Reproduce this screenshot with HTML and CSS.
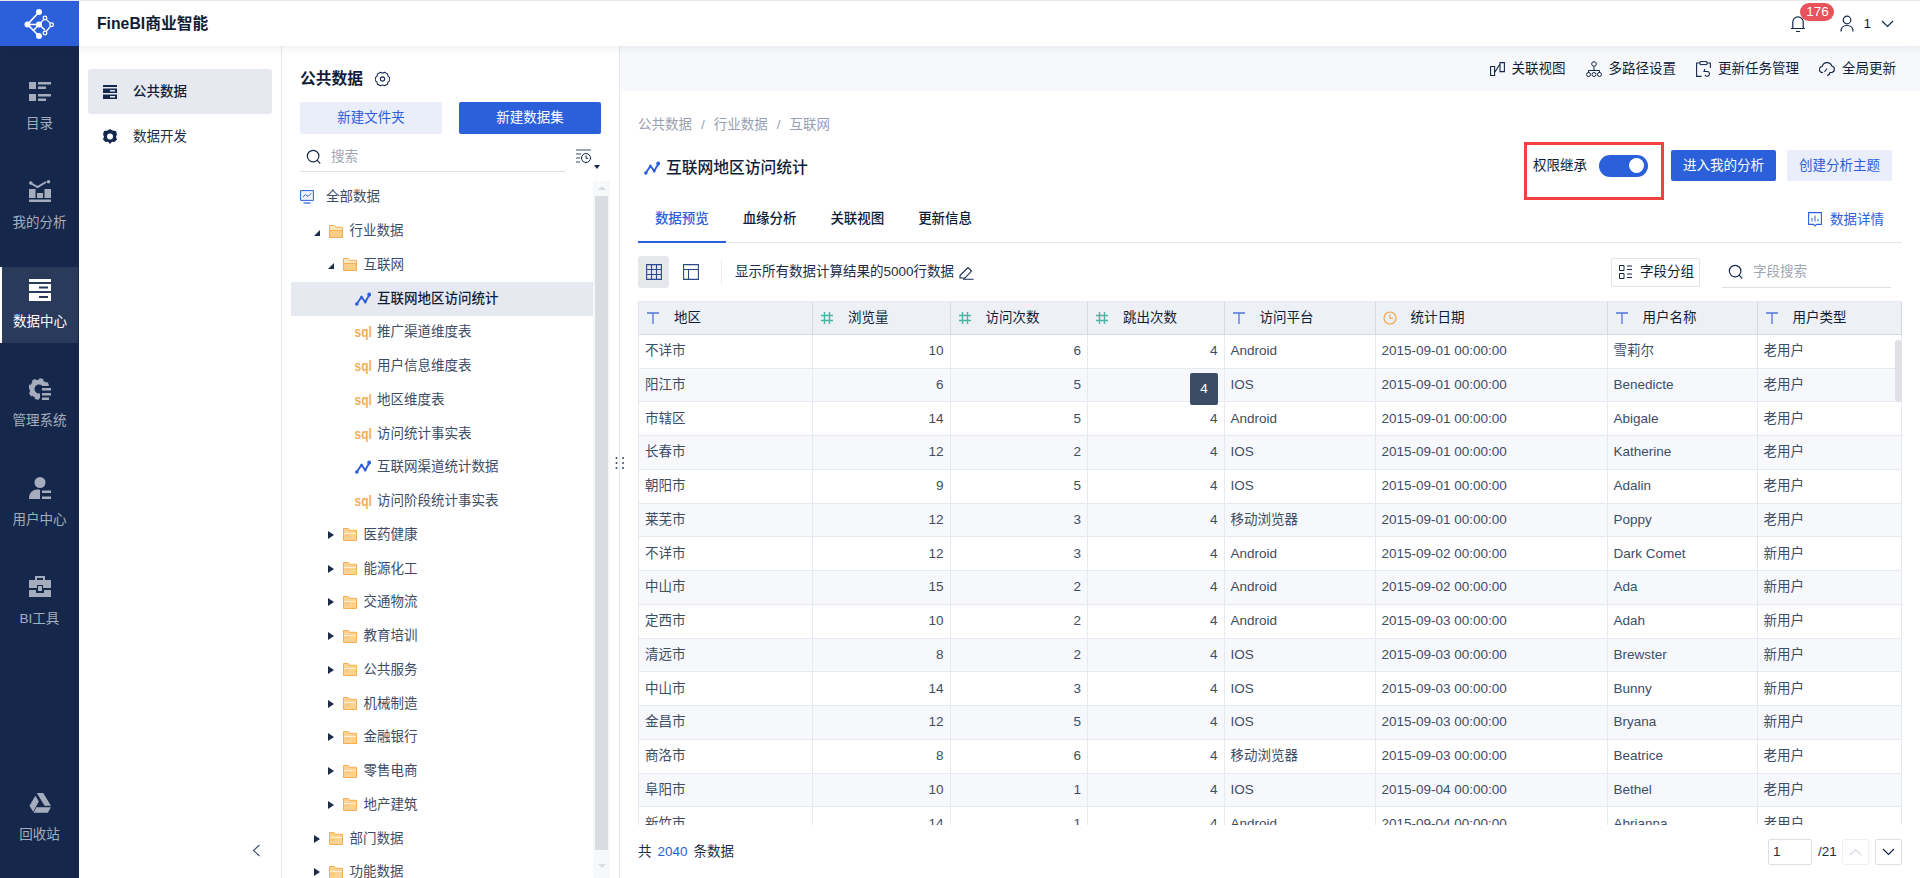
FILE: index.html
```html
<!DOCTYPE html>
<html lang="zh-CN">
<head>
<meta charset="utf-8">
<title>FineBI商业智能</title>
<link rel="stylesheet" href="styles.css">
</head>
<body>
<svg class="sprite" xmlns="http://www.w3.org/2000/svg">
  <symbol id="folder" viewBox="0 0 14 13"><path d="M.5.500h4.800l1.400 1.800h6.800v10.200H.5z" fill="#fbd28f" stroke="#f4ae55"/><path d="M1 5.400h12" stroke="#fff" stroke-opacity=".7"/><path d="M2.500 7.800h3.200" stroke="#f4ae55" stroke-opacity=".7"/></symbol>
  <symbol id="folder-open" viewBox="0 0 14 13"><path d="M.5.500h4.800l1.400 1.800h6.800v10.200H.5z" fill="#fde6bf" stroke="#f4ae55"/><path d="M.7 5.500h12.600v7H.7z" fill="#fbcf88" stroke="#f4ae55"/></symbol>
  <symbol id="trend" viewBox="0 0 16 14"><path d="M1.800 12L6.500 5l3.700 5L14.300 3" fill="none" stroke="#2c60db" stroke-width="1.900"/><circle cx="1.800" cy="12" r="1.800" fill="#2c60db"/><circle cx="6.500" cy="5.500" r="1.400" fill="#2c60db"/><circle cx="10.200" cy="10" r="1.400" fill="#2c60db"/><circle cx="14.200" cy="2.500" r="2" fill="#2c60db"/></symbol>
  <symbol id="search" viewBox="0 0 18 18"><circle cx="8" cy="8" r="6.500" fill="none" stroke="#14284c" stroke-width="1.300"/><path d="M12.600 12.600l3.400 3.800" stroke="#14284c" stroke-width="1.300"/></symbol>
  <symbol id="ty-t" viewBox="0 0 14 14"><path d="M1 2h12M7 2v11" fill="none" stroke="#4f74dd" stroke-width="1.300"/></symbol>
  <symbol id="ty-n" viewBox="0 0 14 14"><path d="M1 4.500h12M1 9.500h12M4.500 1v12M9.500 1v12" fill="none" stroke="#47b6a5" stroke-width="1.400"/></symbol>
  <symbol id="ty-d" viewBox="0 0 14 14"><circle cx="7" cy="7" r="6" fill="none" stroke="#f0a650" stroke-width="1.200"/><path d="M7 3.500V7.300h3" fill="none" stroke="#f0a650" stroke-width="1.200"/></symbol>
</svg>

<div class="app">
  <header class="topbar">
    <div class="logo">
      <svg width="50" height="42" viewBox="0 0 50 42"><path d="M24 9L12.500 21.500 24 33M12.500 21.500L24 21.500 18 28M24 21.500L30 27" fill="none" stroke="#fff" stroke-width="1.600"/><path d="M24 21.500L30 15l6.700 6.700L30 30" fill="none" stroke="#fff" stroke-width="1.200"/><g fill="#fff"><circle cx="24" cy="9" r="3"/><circle cx="12.500" cy="21.500" r="3"/><circle cx="24" cy="21.500" r="3"/><circle cx="24" cy="33" r="3"/></g><g fill="#2c60db" stroke="#fff" stroke-width="1.300"><circle cx="30" cy="15" r="1.800"/><circle cx="36.700" cy="21.700" r="1.800"/><circle cx="30" cy="30" r="1.800"/></g></svg>
    </div>
    <div class="brand">FineBI商业智能</div>
    <div class="top-right">
      <span class="bell">
        <svg width="16" height="18" viewBox="0 0 16 18"><path d="M1 13.500h14M2.800 13.500V7a5.200 5.200 0 0 1 10.400 0v6.500M6 16.500h4" fill="none" stroke="#14284c" stroke-width="1.200"/></svg>
        <span class="badge">176</span>
      </span>
      <svg class="user" width="14" height="17" viewBox="0 0 14 17"><circle cx="7" cy="5" r="3.800" fill="none" stroke="#14284c" stroke-width="1.200"/><path d="M1 16.500c0-4 2.500-6 6-6s6 2 6 6" fill="none" stroke="#14284c" stroke-width="1.200"/></svg>
      <span class="user-name">1</span>
      <svg width="13" height="8" viewBox="0 0 13 8"><path d="M1 1l5.500 5.500L12 1" fill="none" stroke="#14284c" stroke-width="1.200"/></svg>
    </div>
  </header>

  <div class="body">
    <nav class="nav">
      <a class="nav-item">
        <svg class="nav-icon" viewBox="0 0 22 20"><path d="M0 0h7v7H0zM0 12h7v7H0zM9 0h13v2.500H9zM9 4.500h8V7H9zM9 12h13v2.500H9zM9 16.500h8V19H9z"/></svg>
        <span>目录</span>
      </a>
      <a class="nav-item">
        <svg class="nav-icon" viewBox="0 0 22 22"><path d="M0 9h6.500v9H0zM8 13h6v5H8zM15.500 9H22v9h-6.500zM0 19.500h22V22H0z"/><path d="M1.500 3l7 4 8.500-5" fill="none" stroke="currentColor" stroke-width="2"/><circle cx="1.800" cy="3" r="1.800"/><circle cx="19.500" cy="1.800" r="1.800"/></svg>
        <span>我的分析</span>
      </a>
      <a class="nav-item active">
        <svg class="nav-icon" viewBox="0 0 22 22"><path fill-rule="evenodd" d="M0 0h22v3H0zM0 5h22v7H0zM10 7.500v2h9v-2zM0 14h22v8H0zM10 17v2h9v-2z"/></svg>
        <span>数据中心</span>
      </a>
      <a class="nav-item">
        <svg class="nav-icon" viewBox="0 0 22 22"><circle cx="10" cy="11" r="7" fill="none" stroke="currentColor" stroke-width="5"/><circle cx="10" cy="11" r="9.800" fill="none" stroke="currentColor" stroke-width="2" stroke-dasharray="4 3.700"/><path class="nav-cut" d="M11 8h11v14H11z"/><path d="M13 10h9v2.500h-9zM13 15h9v2.500h-9zM13 19.500h7V22h-7z"/></svg>
        <span>管理系统</span>
      </a>
      <a class="nav-item">
        <svg class="nav-icon" viewBox="0 0 22 22"><circle cx="11" cy="5.500" r="5.500"/><path d="M0 22c0-6 3-9 8-9.500.8 0 2.800 0 3 .5v9zM13 13.500h9v2.500h-9zM13 19.500h9V22h-9z"/></svg>
        <span>用户中心</span>
      </a>
      <a class="nav-item">
        <svg class="nav-icon" viewBox="0 0 22 22"><path fill-rule="evenodd" d="M6 4V0h10v4h-2V2H8v2zM0 4h22v8h-8V9H8v3H0zM9 10h4v5H9zM0 14h7v3h8v-3h7v7H0z"/></svg>
        <span>BI工具</span>
      </a>
      <a class="nav-item push">
        <svg class="nav-icon" viewBox="0 0 24 22"><path d="M8.500 0h7L24 14h-7zM7 3l3.700 6.300L4.500 20.500.5 14zM8 15.500h16l-3.500 6H5z"/></svg>
        <span>回收站</span>
      </a>
    </nav>

    <aside class="side">
      <a class="side-item selected">
        <svg width="14" height="14" viewBox="0 0 14 14"><path fill="#14284c" fill-rule="evenodd" d="M0 0h14v2H0zM0 3.500h14V8H0zM7 5v1.500h5V5zM0 9.500h14V14H0zM7 11v1.500h5V11z"/></svg>
        <span>公共数据</span>
      </a>
      <a class="side-item">
        <svg width="14" height="15" viewBox="0 0 14 15"><path fill="#14284c" fill-rule="evenodd" d="M7 0l2.500 1.600L13 2l1 3.500-1 2 1 3-2.500 2.500-2.500-.2L7 15l-2-2.200-2.500.2L0 10.500l1-3-1-2L1 2l3.500-.4zM7 4.500a3 3 0 1 0 0 6 3 3 0 0 0 0-6z"/></svg>
        <span>数据开发</span>
      </a>
      <div class="side-foot">
        <svg width="9" height="13" viewBox="0 0 9 13"><path d="M7.500 1L1.500 6.500l6 5.500" fill="none" stroke="#3d4d66" stroke-width="1.100"/></svg>
      </div>
    </aside>

    <section class="panel">
      <div class="panel-head">
        <h2>公共数据</h2>
        <svg width="15" height="16" viewBox="0 0 15 16"><path d="M5.500 1.200C6.500 2 8.500 2 9.500 1.200l3.200 1.900c-.2 1.300.8 3 2 3.400v3.300c-1.200.4-2.200 2-2 3.300l-3.200 1.700c-1-.8-3-.8-4 0l-3.200-1.700c.2-1.300-.8-2.900-2-3.300V6.500c1.200-.4 2.200-2.100 2-3.400z" fill="none" stroke="#14284c" stroke-width="1.100" stroke-linejoin="round"/><circle cx="7.500" cy="8" r="2.100" fill="none" stroke="#14284c" stroke-width="1.100"/></svg>
      </div>
      <div class="panel-btns">
        <button class="btn btn-light wide">新建文件夹</button>
        <button class="btn btn-blue wide">新建数据集</button>
      </div>
      <div class="panel-search">
        <div class="search-box">
          <svg width="16" height="16"><use href="#search"/></svg>
          <span class="placeholder">搜索</span>
        </div>
        <div class="filter">
          <svg width="15" height="15" viewBox="0 0 15 15"><path d="M0 1h15M0 5h5M0 9h4M0 13h4" stroke="#3d4d66" fill="none"/><circle cx="10" cy="9" r="4.500" fill="#fff" stroke="#14284c"/><path d="M10 6.500v2.800h2.200" fill="none" stroke="#14284c"/></svg>
          <i class="filter-caret"></i>
        </div>
      </div>
      <div class="tree-wrap">
        <div class="tree">
          <div class="row lv0"><svg class="root-ic" width="14" height="15" viewBox="0 0 14 15"><path d="M.6.600h12.800v9.800H.6z" fill="#eef2fc" stroke="#2c60db"/><path d="M3 7l2.500-2.500L8 6.500 11 3.500" fill="none" stroke="#2c60db"/><path d="M3.500 13h7" stroke="#2c60db" stroke-width="1.200"/></svg><span>全部数据</span></div>
          <div class="row lv1"><i class="car-open"></i><svg class="fol"><use href="#folder-open"/></svg><span>行业数据</span></div>
          <div class="row lv2"><i class="car-open"></i><svg class="fol"><use href="#folder-open"/></svg><span>互联网</span></div>
          <div class="row leaf current"><svg class="leaf-ic"><use href="#trend"/></svg><span>互联网地区访问统计</span></div>
          <div class="row leaf"><b class="sql">sql</b><span>推广渠道维度表</span></div>
          <div class="row leaf"><b class="sql">sql</b><span>用户信息维度表</span></div>
          <div class="row leaf"><b class="sql">sql</b><span>地区维度表</span></div>
          <div class="row leaf"><b class="sql">sql</b><span>访问统计事实表</span></div>
          <div class="row leaf"><svg class="leaf-ic"><use href="#trend"/></svg><span>互联网渠道统计数据</span></div>
          <div class="row leaf"><b class="sql">sql</b><span>访问阶段统计事实表</span></div>
          <div class="row lv2"><i class="car"></i><svg class="fol"><use href="#folder"/></svg><span>医药健康</span></div>
          <div class="row lv2"><i class="car"></i><svg class="fol"><use href="#folder"/></svg><span>能源化工</span></div>
          <div class="row lv2"><i class="car"></i><svg class="fol"><use href="#folder"/></svg><span>交通物流</span></div>
          <div class="row lv2"><i class="car"></i><svg class="fol"><use href="#folder"/></svg><span>教育培训</span></div>
          <div class="row lv2"><i class="car"></i><svg class="fol"><use href="#folder"/></svg><span>公共服务</span></div>
          <div class="row lv2"><i class="car"></i><svg class="fol"><use href="#folder"/></svg><span>机械制造</span></div>
          <div class="row lv2"><i class="car"></i><svg class="fol"><use href="#folder"/></svg><span>金融银行</span></div>
          <div class="row lv2"><i class="car"></i><svg class="fol"><use href="#folder"/></svg><span>零售电商</span></div>
          <div class="row lv2"><i class="car"></i><svg class="fol"><use href="#folder"/></svg><span>地产建筑</span></div>
          <div class="row lv1"><i class="car"></i><svg class="fol"><use href="#folder"/></svg><span>部门数据</span></div>
          <div class="row lv1"><i class="car"></i><svg class="fol"><use href="#folder"/></svg><span>功能数据</span></div>
        </div>
        <div class="vbar">
          <i class="arr-up"></i>
          <div class="vthumb"></div>
          <i class="arr-down"></i>
        </div>
      </div>
      <svg class="grip" width="10" height="14" viewBox="0 0 10 14"><g fill="#3d4d66"><circle cx="1.500" cy="2" r="1"/><circle cx="1.500" cy="7" r="1"/><circle cx="1.500" cy="12" r="1"/><circle cx="8" cy="2" r="1"/><circle cx="8" cy="7" r="1"/><circle cx="8" cy="12" r="1"/></g></svg>
    </section>

    <main class="main">
      <div class="actions">
        <a class="action"><svg width="15" height="14" viewBox="0 0 15 14"><path d="M.6 4.500h4v9h-4zM10 .6h4.400v9H10zM4.600 10.500L10 2" fill="none" stroke="#14284c" stroke-width="1.100"/></svg>关联视图</a>
        <a class="action"><svg width="16" height="16" viewBox="0 0 16 16"><circle cx="8" cy="3" r="2.300" fill="none" stroke="#14284c"/><path d="M8 5.500v4M2.500 12V9.500h11V12" fill="none" stroke="#14284c"/><circle cx="2.500" cy="13.500" r="2" fill="none" stroke="#14284c"/><circle cx="8" cy="13.500" r="2" fill="none" stroke="#14284c"/><circle cx="13.500" cy="13.500" r="2" fill="none" stroke="#14284c"/></svg>多路径设置</a>
        <a class="action"><svg width="15" height="16" viewBox="0 0 15 16"><path d="M4 2H.6v13.400h5M11 2h3.400v5" fill="none" stroke="#14284c" stroke-width="1.100"/><path d="M4 .6h7v3H4z" fill="none" stroke="#14284c"/><path d="M9 8l-1 2.500h3.500a2.400 2.400 0 1 1-2.500 3.600" fill="none" stroke="#14284c" stroke-width="1.100"/></svg>更新任务管理</a>
        <a class="action"><svg width="16" height="15" viewBox="0 0 16 15"><path d="M4 11.500H3.500a3 3 0 0 1-.3-6A5 5 0 0 1 12.800 5a3.300 3.300 0 0 1-.3 6.500H11" fill="none" stroke="#14284c" stroke-width="1.100"/><path d="M8 7.500l-2.500 3.500M8 14.500a3.500 3.500 0 0 0 3-3.500" fill="none" stroke="#14284c" stroke-width="1.100"/></svg>全局更新</a>
      </div>

      <div class="content">
        <div class="crumbs"><span>公共数据</span><i>/</i><span>行业数据</span><i>/</i><span>互联网</span></div>
        <div class="head">
          <div class="title"><svg width="16" height="14"><use href="#trend"/></svg><h1>互联网地区访问统计</h1></div>
          <div class="head-right">
            <div class="perm">
              <span>权限继承</span>
              <span class="toggle"><i></i></span>
            </div>
            <button class="btn btn-blue head-btn">进入我的分析</button>
            <button class="btn btn-light head-btn">创建分析主题</button>
          </div>
        </div>
        <div class="tabs">
          <a class="tab on">数据预览</a>
          <a class="tab">血缘分析</a>
          <a class="tab">关联视图</a>
          <a class="tab">更新信息</a>
          <a class="detail"><svg width="14" height="15" viewBox="0 0 14 15"><path d="M.6.600h12.800v11.800H8.500L7 14 5.500 12.400H.6z" fill="none" stroke="#2c60db" stroke-width="1.100"/><path d="M4 6v3.500M7 3.500v6M10 7v2.500" stroke="#2c60db"/></svg>数据详情</a>
        </div>
        <div class="tools">
          <span class="view on"><svg width="16" height="16" viewBox="0 0 16 16"><path d="M.6.600h14.800v14.800H.6zM.6 5.500h14.800M.6 10.500h14.800M5.500.6v14.800M10.500.6v14.800" fill="none" stroke="#2b4a8a" stroke-width="1.100"/></svg></span>
          <span class="view"><svg width="16" height="16" viewBox="0 0 16 16"><path d="M.6.600h14.800v14.800H.6zM.6 5.500h14.800M5.500 5.500v9.900" fill="none" stroke="#2b4a8a" stroke-width="1.100"/></svg></span>
          <i class="vline"></i>
          <span class="notice">显示所有数据计算结果的5000行数据</span>
          <svg class="pencil" width="15" height="15" viewBox="0 0 15 15"><path d="M1 10.500L9 2.500l3.500 3.500-6.500 7H1zM4 14.200h10.500" fill="none" stroke="#14284c" stroke-width="1.100"/></svg>
          <button class="group-btn"><svg width="13" height="14" viewBox="0 0 13 14"><path d="M.5.500h4.500v5H.500zM.5 8.500h4.500v5H.500zM8 1h5M8 4.500h5M8 9h5M8 12.500h5" fill="none" stroke="#14284c"/></svg>字段分组</button>
          <div class="field-search"><svg width="16" height="16"><use href="#search"/></svg><span class="placeholder">字段搜索</span></div>
        </div>

        <div class="table">
          <div class="tr th">
            <div class="td"><svg class="ty"><use href="#ty-t"/></svg>地区</div>
            <div class="td"><svg class="ty"><use href="#ty-n"/></svg>浏览量</div>
            <div class="td"><svg class="ty"><use href="#ty-n"/></svg>访问次数</div>
            <div class="td"><svg class="ty"><use href="#ty-n"/></svg>跳出次数</div>
            <div class="td"><svg class="ty"><use href="#ty-t"/></svg>访问平台</div>
            <div class="td"><svg class="ty"><use href="#ty-d"/></svg>统计日期</div>
            <div class="td"><svg class="ty"><use href="#ty-t"/></svg>用户名称</div>
            <div class="td"><svg class="ty"><use href="#ty-t"/></svg>用户类型</div>
          </div>
          <div class="tr"><div class="td">不详市</div><div class="td num">10</div><div class="td num">6</div><div class="td num">4</div><div class="td">Android</div><div class="td">2015-09-01 00:00:00</div><div class="td">雪莉尔</div><div class="td">老用户</div></div>
          <div class="tr"><div class="td">阳江市</div><div class="td num">6</div><div class="td num">5</div><div class="td num">4</div><div class="td">IOS</div><div class="td">2015-09-01 00:00:00</div><div class="td">Benedicte</div><div class="td">老用户</div></div>
          <div class="tr"><div class="td">市辖区</div><div class="td num">14</div><div class="td num">5</div><div class="td num">4</div><div class="td">Android</div><div class="td">2015-09-01 00:00:00</div><div class="td">Abigale</div><div class="td">老用户</div></div>
          <div class="tr"><div class="td">长春市</div><div class="td num">12</div><div class="td num">2</div><div class="td num">4</div><div class="td">IOS</div><div class="td">2015-09-01 00:00:00</div><div class="td">Katherine</div><div class="td">老用户</div></div>
          <div class="tr"><div class="td">朝阳市</div><div class="td num">9</div><div class="td num">5</div><div class="td num">4</div><div class="td">IOS</div><div class="td">2015-09-01 00:00:00</div><div class="td">Adalin</div><div class="td">老用户</div></div>
          <div class="tr"><div class="td">莱芜市</div><div class="td num">12</div><div class="td num">3</div><div class="td num">4</div><div class="td">移动浏览器</div><div class="td">2015-09-01 00:00:00</div><div class="td">Poppy</div><div class="td">老用户</div></div>
          <div class="tr"><div class="td">不详市</div><div class="td num">12</div><div class="td num">3</div><div class="td num">4</div><div class="td">Android</div><div class="td">2015-09-02 00:00:00</div><div class="td">Dark Comet</div><div class="td">新用户</div></div>
          <div class="tr"><div class="td">中山市</div><div class="td num">15</div><div class="td num">2</div><div class="td num">4</div><div class="td">Android</div><div class="td">2015-09-02 00:00:00</div><div class="td">Ada</div><div class="td">新用户</div></div>
          <div class="tr"><div class="td">定西市</div><div class="td num">10</div><div class="td num">2</div><div class="td num">4</div><div class="td">Android</div><div class="td">2015-09-03 00:00:00</div><div class="td">Adah</div><div class="td">新用户</div></div>
          <div class="tr"><div class="td">清远市</div><div class="td num">8</div><div class="td num">2</div><div class="td num">4</div><div class="td">IOS</div><div class="td">2015-09-03 00:00:00</div><div class="td">Brewster</div><div class="td">新用户</div></div>
          <div class="tr"><div class="td">中山市</div><div class="td num">14</div><div class="td num">3</div><div class="td num">4</div><div class="td">IOS</div><div class="td">2015-09-03 00:00:00</div><div class="td">Bunny</div><div class="td">新用户</div></div>
          <div class="tr"><div class="td">金昌市</div><div class="td num">12</div><div class="td num">5</div><div class="td num">4</div><div class="td">IOS</div><div class="td">2015-09-03 00:00:00</div><div class="td">Bryana</div><div class="td">新用户</div></div>
          <div class="tr"><div class="td">商洛市</div><div class="td num">8</div><div class="td num">6</div><div class="td num">4</div><div class="td">移动浏览器</div><div class="td">2015-09-03 00:00:00</div><div class="td">Beatrice</div><div class="td">老用户</div></div>
          <div class="tr"><div class="td">阜阳市</div><div class="td num">10</div><div class="td num">1</div><div class="td num">4</div><div class="td">IOS</div><div class="td">2015-09-04 00:00:00</div><div class="td">Bethel</div><div class="td">老用户</div></div>
          <div class="tr"><div class="td">新竹市</div><div class="td num">14</div><div class="td num">1</div><div class="td num">4</div><div class="td">Android</div><div class="td">2015-09-04 00:00:00</div><div class="td">Abrianna</div><div class="td">老用户</div></div>
          <div class="tip">4</div>
          <div class="hthumb"></div>
        </div>

        <div class="foot">
          <div class="count">共<b>2040</b>条数据</div>
          <div class="pager">
            <span class="page-input">1</span>
            <span class="page-total">/21</span>
            <span class="page-btn off"><svg width="13" height="8" viewBox="0 0 13 8"><path d="M1 7l5.500-5.500L12 7" fill="none" stroke="#d5d9e2" stroke-width="1.200"/></svg></span>
            <span class="page-btn"><svg width="13" height="8" viewBox="0 0 13 8"><path d="M1 1l5.500 5.500L12 1" fill="none" stroke="#14284c" stroke-width="1.200"/></svg></span>
          </div>
        </div>
      </div>
    </main>
  </div>
</div>
</body>
</html>
```

FILE: styles.css
```css
*, *::before, *::after { box-sizing: border-box; }
html, body { margin: 0; height: 100%; overflow: hidden; }
body {
  background: #fff;
  color: #0f1d38;
  font-family: "Liberation Sans", "Noto Sans CJK SC", sans-serif;
  font-size: 13.5px;
  line-height: 20px;
}
i { font-style: normal; display: block; }
h1, h2 { margin: 0; }
button { font: inherit; border: 0; padding: 0; }
.sprite { display: none; }

.app { display: flex; flex-direction: column; width: 1920px; height: 878px; overflow: hidden; }

/* top bar */
.topbar {
  position: relative;
  z-index: 2;
  flex: none;
  display: flex;
  align-items: center;
  height: 46px;
  background: #fff;
  border-top: 1px solid #e5e7eb;
  box-shadow: 0 2px 8px rgba(20, 40, 76, .08);
}
.logo { flex: none; display: flex; align-items: center; justify-content: center; width: 79px; height: 45px; background: #2c60db; }
.brand { margin-left: 18px; font-size: 15.75px; font-weight: 700; color: #0f1d38; }
.top-right { display: flex; align-items: center; margin-left: auto; padding-right: 26px; }
.bell { position: relative; display: flex; margin-right: 34px; }
.badge {
  position: absolute;
  left: 10px;
  top: -12px;
  min-width: 34px;
  height: 18px;
  border-radius: 9px;
  background: #e8525a;
  color: #fff;
  line-height: 18px;
  text-align: center;
}
.user-name { margin: 0 10px 0 9px; }

/* nav */
.body { flex: 1; display: flex; min-height: 0; }
.nav {
  flex: none;
  display: flex;
  flex-direction: column;
  gap: 23px;
  width: 79px;
  padding: 23px 0 22px;
  background: #15284b;
  color: #a5adbd;
}
.nav-item { display: flex; flex-direction: column; align-items: center; height: 76px; padding-top: 12px; }
.nav-item span { margin-top: 11px; white-space: nowrap; }
.nav-icon { width: 22px; height: 22px; fill: currentColor; }
.nav-cut { fill: #15284b; }
.nav-item.active { margin-right: 1px; background: #2a3a5a; border-left: 2px solid #fff; color: #fff; }
.nav-item.push { margin-top: auto; }

/* secondary side */
.side { flex: none; display: flex; flex-direction: column; width: 203px; padding: 23px 9px 21px; border-right: 1px solid #e3e6ec; }
.side-item { display: flex; align-items: center; height: 45px; padding-left: 15px; color: #1c2c4a; }
.side-item svg { margin-right: 16px; }
.side-item.selected { background: #e6e9f0; border-radius: 3px; font-weight: 500; color: #0f1d38; }
.side-foot { display: flex; justify-content: flex-end; margin-top: auto; padding-right: 11px; }

/* tree panel */
.panel { position: relative; flex: none; display: flex; flex-direction: column; width: 338px; padding-top: 23px; border-right: 1px solid #e3e6ec; }
.panel-head { display: flex; align-items: center; gap: 12px; height: 20px; margin-left: 18px; }
.panel-head h2 { font-size: 15.75px; font-weight: 700; }
.panel-btns { display: flex; gap: 17px; margin: 13px 0 0 18px; }
.btn { border-radius: 2px; text-align: center; }
.btn-blue { background: #2c60db; color: #fff; }
.btn-light { background: #e9eefa; color: #2c60db; }
.wide { width: 142px; height: 32px; }
.panel-search { display: flex; height: 38px; margin-left: 18px; }
.search-box { display: flex; align-items: center; width: 265px; height: 38px; padding: 8px 0 0 6px; border-bottom: 1px solid #dde0e6; }
.placeholder { margin-left: 9px; color: #a0a6b2; }
.filter { position: relative; margin-left: 11px; padding-top: 15px; }
.filter-caret {
  position: absolute;
  left: 18px;
  top: 31px;
  border: 3px solid transparent;
  border-top: 4px solid #14284c;
  border-bottom: 0;
}
.tree-wrap { flex: 1; display: flex; min-height: 0; margin: 8.5px 0 0 9px; }
.tree { flex: none; width: 302px; overflow: hidden; }
.row { display: flex; align-items: center; height: 33.75px; white-space: nowrap; color: #3d4d66; }
.lv0 { padding-left: 9px; }
.root-ic { margin-right: 12px; }
.lv1 { padding-left: 23px; }
.lv2 { padding-left: 37px; }
.leaf { padding-left: 64px; }
.car, .car-open { flex: none; width: 0; height: 0; }
.car { margin-right: 10px; border-top: 4px solid transparent; border-bottom: 4px solid transparent; border-left: 6px solid #1c2c4a; margin-right: 9px; }
.car-open { margin: 3px 9px 0 0; border-left: 6px solid transparent; border-bottom: 6px solid #1c2c4a; }
.fol { flex: none; width: 14px; height: 13px; margin-right: 6.5px; }
.leaf-ic { flex: none; width: 16px; height: 14px; margin-right: 6px; }
.sql { flex: none; width: 16px; margin-right: 6px; color: #f4ae55; font-size: 12px; line-height: 14px; white-space: nowrap; transform: translateX(-.5px) scaleY(1.2); }
.current { background: #e6e9f0; color: #0f1d38; font-weight: 500; }
.vbar { flex: none; display: flex; flex-direction: column; align-items: center; width: 17px; background: #f7f8fa; }
.vthumb { width: 13px; height: 654px; margin-top: 6px; background: #d9dce1; }
.arr-up, .arr-down { width: 0; height: 0; border: 4px solid transparent; }
.arr-up { margin-top: 5px; border-top: 0; border-bottom: 4px solid #d9dce1; }
.arr-down { margin-top: 14px; border-bottom: 0; border-top: 4px solid #d9dce1; }
.grip { position: absolute; right: -6px; top: 410px; z-index: 1; }

/* main */
.main { flex: 1; display: flex; flex-direction: column; min-width: 0; }
.actions { flex: none; display: flex; justify-content: flex-end; gap: 20px; height: 45px; padding-right: 24px; background: #f7f8fb; align-items: center; }
.action { display: flex; align-items: center; gap: 7px; color: #0f1d38; white-space: nowrap; }
.content { flex: 1; display: flex; flex-direction: column; padding: 24px 18px 0; min-height: 0; }
.crumbs { display: flex; gap: 9px; height: 20px; color: #98a0af; }
.head { display: flex; align-items: center; height: 31px; margin-top: 15px; }
.title { display: flex; align-items: center; gap: 6px; margin: 4px 0 0 6px; }
.title h1 { font-size: 15.75px; font-weight: 500; color: #0f1d38; }
.head-right { display: flex; align-items: center; margin-left: auto; margin-right: 10px; }
.perm {
  position: relative;
  display: flex;
  align-items: center;
  gap: 12px;
  margin-right: 23px;
}
.perm::after {
  content: "";
  position: absolute;
  left: -9px;
  right: -16px;
  top: -13px;
  height: 58px;
  border: 3px solid #f54040;
}
.toggle { display: block; position: relative; width: 49px; height: 22px; border-radius: 11px; background: #2c60db; }
.toggle i { position: absolute; right: 4px; top: 3.5px; width: 15px; height: 15px; border-radius: 50%; background: #fff; }
.head-btn { width: 105px; height: 31px; margin-left: 11px; }
.perm + .head-btn { margin-left: 0; }
.tabs { display: flex; align-items: center; width: 1264px; height: 46px; margin-top: 16px; border-bottom: 1px solid #e3e6ec; }
.tab { display: flex; align-items: center; justify-content: center; width: 87.750px; height: 46px; font-weight: 500; color: #0f1d38; border-bottom: 2px solid transparent; }
.tab.on { color: #2c60db; border-bottom-color: #2c60db; }
.detail { display: flex; align-items: center; gap: 8px; margin-left: auto; margin-right: 18px; color: #2c60db; }
.tools { display: flex; align-items: center; width: 1264px; height: 32px; margin-top: 13px; }
.view { display: flex; align-items: center; justify-content: center; width: 31px; height: 32px; border-radius: 3px; margin-right: 6px; }
.view.on { background: #e6e8ec; }
.vline { width: 1px; height: 26px; margin: 0 13px 0 9px; background: #eceef2; }
.notice { color: #1c2c4a; white-space: nowrap; }
.pencil { margin-left: 5px; }
.group-btn { display: flex; align-items: center; gap: 8px; height: 29px; width: 89px; margin-left: auto; padding-left: 7px; background: #fff; border: 1px solid #e1e4ea; border-radius: 2px; color: #0f1d38; }
.field-search { display: flex; align-items: center; width: 169px; height: 32px; margin: 0 11px 0 22px; padding-left: 6px; border-bottom: 1px solid #dde0e6; }

/* table */
.table { position: relative; flex: none; width: 1264px; height: 524px; margin-top: 13px; overflow: hidden; border-left: 1px solid #e3e6ec; }
.tr {
  display: grid;
  grid-template-columns: 174px 137.5px 137.500px 136.5px 151px 232px 150px 144.5px;
  height: 33.750px;
  border-bottom: 1px solid #e6e9f0;
}
.tr:nth-child(odd) { background: #f7f8fc; }
.td { display: flex; align-items: center; min-width: 0; padding: 0 6px; border-right: 1px solid #e6e9f0; color: #3d4d66; white-space: nowrap; overflow: hidden; }
.num { justify-content: flex-end; }
.tr.th { background: #edf0f5; border-bottom: 1px solid #d5d9e2; border-top: 1px solid #e6e9f0; }
.th .td { padding-left: 7px; border-right-color: #d5d9e2; color: #0f1d38; }
.ty { flex: none; width: 14px; height: 14px; margin-right: 14px; }
.tip {
  position: absolute;
  left: 551px;
  top: 72px;
  width: 28px;
  height: 32px;
  border-radius: 2px;
  background: #3c4c66;
  color: #fff;
  line-height: 32px;
  text-align: center;
}
.hthumb { position: absolute; right: 0; top: 39px; width: 7px; height: 62px; border-radius: 3px; background: #dfe1e6; }

/* footer */
.foot { flex: 1; display: flex; align-items: center; justify-content: space-between; width: 1264px; }
.count { display: flex; gap: 6px; color: #1c2c4a; }
.count b { font-weight: 400; color: #2c60db; }
.pager { display: flex; align-items: center; }
.page-input { width: 44px; height: 26px; padding-left: 4px; border: 1px solid #dde0e6; border-radius: 2px; line-height: 24px; color: #1c2c4a; }
.page-total { width: 30px; padding-left: 6px; color: #1c2c4a; }
.page-btn { display: flex; align-items: center; justify-content: center; width: 27px; height: 26px; margin-left: 6px; border: 1px solid #dde0e6; border-radius: 2px; }
.page-total + .page-btn { margin-left: 0; }
.page-btn.off { border-color: #eef0f3; }
```
